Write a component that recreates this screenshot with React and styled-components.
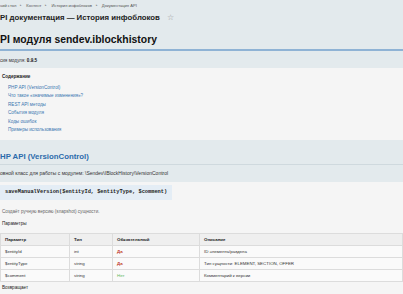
import styled, { createGlobalStyle } from 'styled-components'

const GlobalStyle = createGlobalStyle`
  html, body {
    margin: 0;
    padding: 0;
    background: #f5f5f5;
    overflow: hidden;
  }
  body {
    font-family: "Liberation Sans", Arial, sans-serif;
    color: #222;
  }
`

const toc = [
  'PHP API (VersionControl)',
  'Что такое «значимые изменения»?',
  'REST API методы',
  'События модуля',
  'Коды ошибок',
  'Примеры использования',
]

const params = [
  { name: '$entityId', type: 'int', required: true, desc: 'ID элемента/раздела' },
  { name: '$entityType', type: 'string', required: true, desc: 'Тип сущности: ELEMENT, SECTION, OFFER' },
  { name: '$comment', type: 'string', required: false, desc: 'Комментарий к версии' },
]

// the screenshot is cropped on the left, so the first words are partial
const crumbs = ['чий стол', 'Контент', 'История инфоблоков', 'Документация API']

export default function App() {
  return (
    <>
      <GlobalStyle />
      <Header>
        <Breadcrumbs>
          {crumbs.map((c, i) => (
            <Crumb key={c}>
              {i > 0 && <Sep>▸</Sep>}
              {c}
            </Crumb>
          ))}
        </Breadcrumbs>
        <PageTitle>
          PI документация — История инфоблоков
          <Star>☆</Star>
        </PageTitle>
        <DocTitle>PI модуля sendev.iblockhistory</DocTitle>
        <Version>
          сия модуля: <b>0.9.5</b>
        </Version>
      </Header>

      <Toc>
        <TocTitle>Содержание</TocTitle>
        <TocList>
          {toc.map((t) => (
            <TocItem key={t}>
              <a>{t}</a>
            </TocItem>
          ))}
        </TocList>
      </Toc>

      <Band>
        <SectionTitle>HP API (VersionControl)</SectionTitle>
        <Lead>овной класс для работы с модулем: \Sendev\IBlockHistory\VersionControl</Lead>
      </Band>

      <Method>
        <Code>saveManualVersion($entityId, $entityType, $comment)</Code>
      </Method>
      <Muted>Создаёт ручную версию (snapshot) сущности.</Muted>
      <Label>Параметры</Label>

      <Table>
        <thead>
          <tr>
            <Th width="69">Параметр</Th>
            <Th width="43">Тип</Th>
            <Th width="87">Обязательный</Th>
            <Th>Описание</Th>
          </tr>
        </thead>
        <tbody>
          {params.map((p) => (
            <tr key={p.name}>
              <Td>{p.name}</Td>
              <Td>{p.type}</Td>
              <Td>
                <Req required={p.required}>{p.required ? 'Да' : 'Нет'}</Req>
              </Td>
              <Td>{p.desc}</Td>
            </tr>
          ))}
        </tbody>
      </Table>
      <Label>Возвращает</Label>
    </>
  )
}

const Header = styled.header`
  background: #e3eaed;
  height: 68px;
  overflow: hidden;
`

const Breadcrumbs = styled.nav`
  display: flex;
  height: 11px;
  line-height: 11px;
  font-size: 4.1px;
  color: #555;
`

const Crumb = styled.span`
  display: flex;
  align-items: center;
`

const Sep = styled.span`
  font-size: 3px;
  color: #777;
  margin: 0 4px;
`

const PageTitle = styled.h1`
  margin: 0;
  height: 13px;
  line-height: 13px;
  font-size: 7.8px;
  font-weight: 700;
  color: #222;
  display: flex;
  align-items: center;
`

const Star = styled.span`
  font-size: 7.5px;
  font-weight: 400;
  color: #999;
  margin-left: 7px;
`

const DocTitle = styled.h2`
  margin: 7px 0 0;
  height: 18px;
  line-height: 18px;
  font-size: 10.4px;
  font-weight: 700;
  color: #111;
  border-bottom: 2px solid #8fb3d5;
`

const Version = styled.div`
  margin-top: 3px;
  line-height: 14px;
  font-size: 4.6px;
  color: #333;

  b {
    color: #111;
  }
`

const Toc = styled.section`
  box-sizing: border-box;
  height: 72px;
  padding: 4px 0 0 2px;
`

const TocTitle = styled.div`
  line-height: 10px;
  font-size: 4.6px;
  font-weight: 700;
  color: #222;
`

const TocList = styled.ul`
  margin: 2px 0 0;
  padding: 0 0 0 6px;
  list-style: square;
  font-size: 4.6px;
`

const TocItem = styled.li`
  line-height: 8.4px;
  color: #333;

  a {
    color: #3a75b0;
  }
`

const Band = styled.section`
  background: #e3eaed;
  height: 42px;
`

const SectionTitle = styled.h3`
  margin: 0;
  padding-top: 10px;
  line-height: 14px;
  font-size: 7.8px;
  font-weight: 700;
  color: #2c6bab;
  border-bottom: 1px solid #cfd9de;
`

const Lead = styled.p`
  margin: 0;
  line-height: 17px;
  font-size: 5px;
  color: #333;
`

const Method = styled.div`
  display: flex;
  margin-top: 3px;
`

const Code = styled.code`
  background: #e4edf5;
  height: 15px;
  line-height: 15px;
  padding: 0 5px;
  font-family: "Liberation Mono", monospace;
  font-weight: 700;
  font-size: 5.3px;
  color: #222;
`

const Muted = styled.p`
  margin: 6px 0 0 2px;
  line-height: 12px;
  font-size: 4.6px;
  color: #666;
`

const Label = styled.p`
  margin: 0 0 0 2px;
  line-height: 12px;
  font-size: 4.6px;
  color: #222;
`

const Table = styled.table`
  margin-top: 3px;
  width: 403px;
  border-collapse: collapse;
  background: #fafafa;
  font-size: 4.4px;
`

const Th = styled.th`
  width: ${({ width }) => (width ? `${width}px` : 'auto')};
  height: 12px;
  padding: 0 4px;
  text-align: left;
  font-weight: 700;
  background: #efefef;
  color: #222;
  border: 1px solid #dcdcdc;
  box-sizing: border-box;
`

const Td = styled.td`
  height: 12px;
  padding: 0 4px;
  color: #333;
  border: 1px solid #dcdcdc;
  box-sizing: border-box;
`

const Req = styled.span`
  color: ${({ required }) => (required ? '#c0392b' : '#5cb85c')};
  font-weight: ${({ required }) => (required ? 700 : 400)};
`
